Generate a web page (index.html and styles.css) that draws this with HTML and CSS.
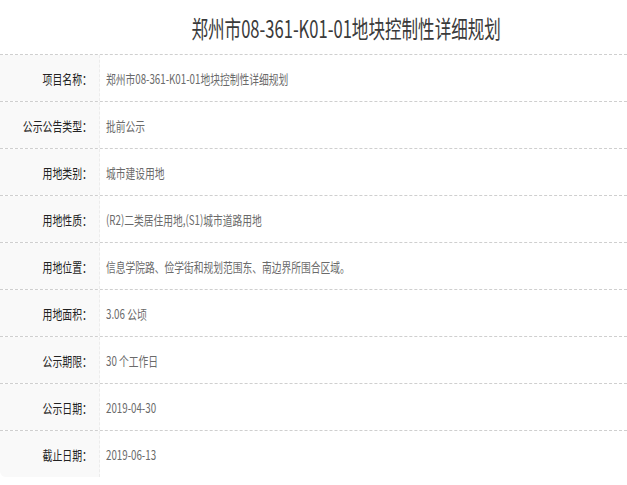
FILE: index.html
```html
<!DOCTYPE html>
<html lang="zh-CN">
<head>
<meta charset="utf-8">
<title>郑州市08-361-K01-01地块控制性详细规划</title>
<link rel="stylesheet" href="styles.css">
</head>
<body>
<div class="page">
  <h1 class="title"><span class="title-text">郑州市08-361-K01-01地块控制性详细规划</span></h1>
  <div class="info">
    <div class="row"><div class="label"><span class="lt">项目名称：</span></div><div class="value"><span class="vt">郑州市08-361-K01-01地块控制性详细规划</span></div></div>
    <div class="row"><div class="label"><span class="lt">公示公告类型：</span></div><div class="value"><span class="vt">批前公示</span></div></div>
    <div class="row"><div class="label"><span class="lt">用地类别：</span></div><div class="value"><span class="vt">城市建设用地</span></div></div>
    <div class="row"><div class="label"><span class="lt">用地性质：</span></div><div class="value"><span class="vt">(R2)二类居住用地,(S1)城市道路用地</span></div></div>
    <div class="row"><div class="label"><span class="lt">用地位置：</span></div><div class="value"><span class="vt">信息学院路、俭学街和规划范围东、南边界所围合区域。</span></div></div>
    <div class="row"><div class="label"><span class="lt">用地面积：</span></div><div class="value"><span class="vt">3.06 公顷</span></div></div>
    <div class="row"><div class="label"><span class="lt">公示期限：</span></div><div class="value"><span class="vt">30 个工作日</span></div></div>
    <div class="row"><div class="label"><span class="lt">公示日期：</span></div><div class="value"><span class="vt">2019-04-30</span></div></div>
    <div class="row last"><div class="label"><span class="lt">截止日期：</span></div><div class="value"><span class="vt">2019-06-13</span></div></div>
  </div>
</div>
</body>
</html>
```
FILE: styles.css
```css
html, body {
  margin: 0;
  padding: 0;
  background: #fff;
}
body {
  font-family: "Noto Sans CJK SC", "Noto Sans", sans-serif;
  color: #333;
}
.page {
  width: 627px;
}
.title {
  margin: 0;
  height: 54px;
  padding-left: 66px;
  display: flex;
  align-items: center;
  justify-content: center;
  font-size: 24px;
  font-weight: normal;
  color: #3a3a3a;
  white-space: nowrap;
}
.title-text {
  display: inline-block;
  transform: scaleX(0.69);
  transform-origin: center;
  line-height: 1;
  margin-top: 2px;
}
.info {
  display: flex;
  flex-direction: column;
}
.row {
  display: grid;
  grid-template-columns: 100px 1fr;
  border-top: 1px dashed #cfcfcf;
  height: 46px;
}
.label {
  background: #f9f9f9;
  border-right: 1px dashed #ececec;
  display: flex;
  align-items: center;
  justify-content: flex-end;
  padding-right: 7px;
  font-size: 13px;
  color: #222;
  white-space: nowrap;
}
.row.last .label {
  border-bottom-left-radius: 6px;
}
.lt {
  display: inline-block;
  transform: scaleX(0.76);
  transform-origin: right center;
}
.value {
  display: flex;
  align-items: center;
  padding-left: 6px;
  font-size: 13px;
  color: #6a6a6a;
  white-space: nowrap;
}
.vt {
  display: inline-block;
  transform: scaleX(0.75);
  transform-origin: left center;
}
```
